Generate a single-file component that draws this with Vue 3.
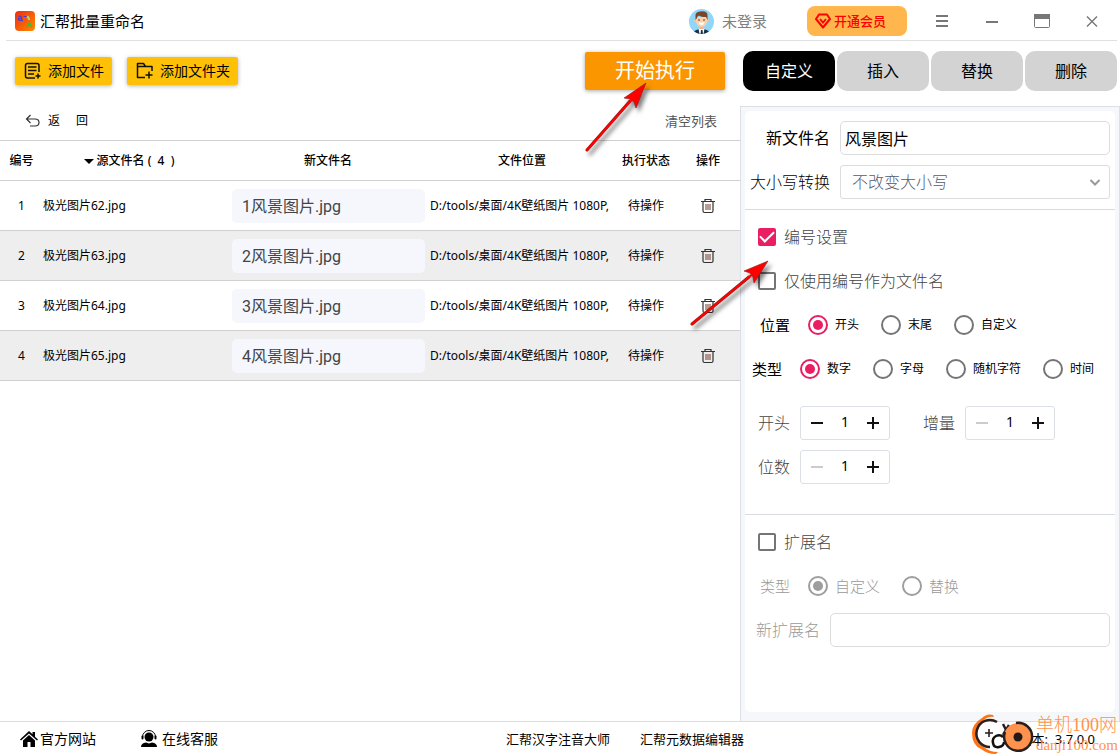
<script setup>
import { ref } from 'vue'

const tabs = ['自定义', '插入', '替换', '删除']
const activeTab = ref('自定义')

const path = 'D:/tools/桌面/4K壁纸图片 1080P,'
const files = ref([
  { id: 1, source: '极光图片62.jpg', target: '1风景图片.jpg', path, status: '待操作' },
  { id: 2, source: '极光图片63.jpg', target: '2风景图片.jpg', path, status: '待操作' },
  { id: 3, source: '极光图片64.jpg', target: '3风景图片.jpg', path, status: '待操作' },
  { id: 4, source: '极光图片65.jpg', target: '4风景图片.jpg', path, status: '待操作' },
])

const newName = ref('风景图片')
const letterCase = ref('不改变大小写')
const numbering = ref(true)
const numberOnly = ref(false)
const positions = ['开头', '末尾', '自定义']
const position = ref('开头')
const kinds = ['数字', '字母', '随机字符', '时间']
const kind = ref('数字')
const start = ref(1)
const step = ref(1)
const digits = ref(1)
const changeExt = ref(false)
const extKinds = ['自定义', '替换']
const extKind = ref('自定义')
const newExt = ref('')
</script>

<template>
  <div class="app">
    <header class="titlebar">
      <svg class="logo" viewBox="0 0 20 20" aria-hidden="true">
        <defs>
          <linearGradient id="logo-bg" x1="0" y1="0" x2="1" y2="1">
            <stop offset="0" stop-color="#f02a10" />
            <stop offset="1" stop-color="#ff8a00" />
          </linearGradient>
        </defs>
        <rect width="20" height="20" rx="4" fill="url(#logo-bg)" />
        <path d="M3.500 5.500q3-1 3 1v3M6.500 7q-3.500 0-3 1.500t3 .5M6.500 9.300h1.500" fill="none" stroke="#3540e8" stroke-width="1.200" />
        <path d="M8.500 5.500h3" fill="none" stroke="#3540e8" stroke-width="1" />
        <path d="M12 5.500q2 .5 2 3.500" fill="none" stroke="#a8d86a" stroke-width="2" />
        <path d="M12 16l2.500-4.500 2.500 5M13 14.500h3" fill="none" stroke="#35c030" stroke-width="1.300" />
      </svg>
      <h1>汇帮批量重命名</h1>
      <button class="user" type="button">
        <svg viewBox="0 0 25 25" aria-hidden="true">
          <defs><clipPath id="avatar-clip"><circle cx="12.500" cy="12.500" r="12.500" /></clipPath></defs>
          <g clip-path="url(#avatar-clip)">
            <rect width="25" height="25" fill="#8fd6fa" />
            <path d="M5 25v-2.500q1-1.500 5-2.500h5q4 1 5 2.500V25z" fill="#1c3350" />
            <path d="M9.500 19.500h6L14.500 25h-4z" fill="#fff" />
            <path d="M12 21h1.500l.5 4h-2.500z" fill="#1c3350" />
            <rect x="10.500" y="16" width="4" height="4" fill="#efb48c" />
            <circle cx="6.500" cy="11.500" r="1.500" fill="#f7c39c" />
            <circle cx="18.500" cy="11.500" r="1.500" fill="#f7c39c" />
            <path d="M7 8h11v5q-1 5-5.500 5T7 13z" fill="#fcd0aa" />
            <path d="M6.500 11V7Q6 3 11 2.500q8-1 7.500 4.500v4l-1.500-3q-5 0-7-1.500Q8 7 8 9z" fill="#7a4429" />
            <circle cx="10" cy="11" r=".8" fill="#3b2a20" />
            <circle cx="15" cy="11" r=".8" fill="#3b2a20" />
            <path d="M9.500 13.500h6q-.5 2.500-3 2.500t-3-2.500z" fill="#fff" />
          </g>
        </svg>
        未登录
      </button>
      <button class="vip" type="button">
        <svg viewBox="0 0 16 16" aria-hidden="true">
          <path d="M4 1.500h8l3 4.500-7 8.500L1 6z" fill="none" stroke="#f00" stroke-width="2" stroke-linejoin="round" />
          <path d="M5 6l3 3.500L11 6" fill="none" stroke="#f00" stroke-width="1.800" />
        </svg>
        开通会员
      </button>
      <div class="win">
        <button type="button" aria-label="菜单">
          <svg viewBox="0 0 16 16"><path d="M2 3h12M2 8h12M2 13h12" stroke="#777" stroke-width="2" /></svg>
        </button>
        <button type="button" aria-label="最小化">
          <svg viewBox="0 0 16 16"><path d="M2 9h12" stroke="#777" stroke-width="2" /></svg>
        </button>
        <button type="button" aria-label="最大化">
          <svg viewBox="0 0 16 16"><rect x=".5" y="1.500" width="15" height="13" rx="1" fill="#fff" stroke="#777" /><path d="M0 1h16v5H0z" fill="#777" /></svg>
        </button>
        <button type="button" aria-label="关闭">
          <svg viewBox="0 0 16 16"><path d="M3 3.500l10 10M13 3.500l-10 10" stroke="#777" stroke-width="1.400" /></svg>
        </button>
      </div>
    </header>

    <main class="body">
      <section class="left">
        <div class="toolbar">
          <button class="add" type="button">
            <svg viewBox="0 0 18 18" aria-hidden="true">
              <path d="M11 16H3.500Q1.500 16 1.500 14V3.500q0-2 2-2h9.500q2 0 2 2V10M4 5h8.500M4 8.500h8.500M4 12h6M14 11.500v5M11.500 14h5" fill="none" stroke="#111" stroke-width="1.500" />
            </svg>
            添加文件
          </button>
          <button class="add" type="button">
            <svg viewBox="0 0 18 18" aria-hidden="true">
              <path d="M9 15.500H1.500V1.500h6l2 3h6.500V9M1.500 4.500h8M13 9.500v7M9.500 13h7" fill="none" stroke="#111" stroke-width="1.500" stroke-linejoin="round" />
            </svg>
            添加文件夹
          </button>
          <button class="run" type="button">开始执行</button>
        </div>
        <div class="subbar">
          <button class="back" type="button">
            <svg viewBox="0 0 16 16" aria-hidden="true">
              <path d="M5.500 2L1.500 6l4 4M1.500 6h8.500q4 0 4 3.500t-4 3.500H5" fill="none" stroke="#333" stroke-width="1.200" />
            </svg>
            <span>返</span><span>回</span>
          </button>
          <button class="clear" type="button">清空列表</button>
        </div>
        <table class="files">
          <colgroup>
            <col class="c-no"><col class="c-src"><col class="c-new"><col><col class="c-state"><col class="c-op">
          </colgroup>
          <thead>
            <tr>
              <th>编号</th>
              <th class="sorted"><i class="caret"></i>源文件名 (&nbsp; 4 &nbsp;)</th>
              <th>新文件名</th>
              <th>文件位置</th>
              <th>执行状态</th>
              <th>操作</th>
            </tr>
          </thead>
          <tbody>
            <tr v-for="f in files" :key="f.id">
              <td class="mid">{{ f.id }}</td>
              <td>{{ f.source }}</td>
              <td class="edit"><input v-model="f.target" type="text" :aria-label="'新文件名 ' + f.id"></td>
              <td class="path">{{ f.path }}</td>
              <td class="mid">{{ f.status }}</td>
              <td class="mid">
                <button class="trash" type="button" aria-label="删除文件">
                  <svg viewBox="0 0 16 16">
                    <path d="M1 3.500h14M5 3.500V1.500h6v2M3 3.500V13q0 1.500 1.500 1.500h7q1.500 0 1.500-1.500V3.500" fill="none" stroke="#333" stroke-width="1.200" />
                    <path d="M6 6v6M8 6v6M10 6v6" stroke="#8a5a48" stroke-width="1.200" />
                  </svg>
                </button>
              </td>
            </tr>
          </tbody>
        </table>
      </section>

      <aside class="right">
        <nav class="tabs">
          <button v-for="t in tabs" :key="t" type="button" :class="{ active: t === activeTab }" @click="activeTab = t">{{ t }}</button>
        </nav>
        <div class="panel">
          <div class="card">
            <div class="group">
              <div class="row">
                <label class="field-label" for="new-name">新文件名</label>
                <input id="new-name" v-model="newName" class="text" type="text">
              </div>
              <div class="row">
                <label class="field-label thin" for="letter-case">大小写转换</label>
                <div class="select">
                  <select id="letter-case" v-model="letterCase">
                    <option>不改变大小写</option>
                    <option>全部大写</option>
                    <option>全部小写</option>
                  </select>
                  <svg viewBox="0 0 12 12" aria-hidden="true"><path d="M1.500 4L6 8.500 10.500 4" fill="none" stroke="#999" stroke-width="2" /></svg>
                </div>
              </div>
            </div>

            <div class="group numbering">
              <label class="row check"><input v-model="numbering" type="checkbox">编号设置</label>
              <label class="row check"><input v-model="numberOnly" type="checkbox">仅使用编号作为文件名</label>
              <div class="row radios indent" role="radiogroup" aria-label="位置">
                <span class="name">位置</span>
                <label v-for="p in positions" :key="p"><input v-model="position" type="radio" name="position" :value="p">{{ p }}</label>
              </div>
              <div class="row radios" role="radiogroup" aria-label="类型">
                <span class="name">类型</span>
                <label v-for="k in kinds" :key="k"><input v-model="kind" type="radio" name="kind" :value="k">{{ k }}</label>
              </div>
              <div class="row steppers first">
                <label for="start">开头</label>
                <div class="stepper">
                  <button type="button" aria-label="减少开头" @click="start--"><i class="minus"></i></button>
                  <input id="start" v-model="start" type="text">
                  <button type="button" aria-label="增加开头" @click="start++"><i class="minus plus"></i></button>
                </div>
                <label class="second" for="step">增量</label>
                <div class="stepper">
                  <button type="button" aria-label="减少增量" :disabled="step <= 1" @click="step--"><i class="minus"></i></button>
                  <input id="step" v-model="step" type="text">
                  <button type="button" aria-label="增加增量" @click="step++"><i class="minus plus"></i></button>
                </div>
              </div>
              <div class="row steppers">
                <label for="digits">位数</label>
                <div class="stepper">
                  <button type="button" aria-label="减少位数" :disabled="digits <= 1" @click="digits--"><i class="minus"></i></button>
                  <input id="digits" v-model="digits" type="text">
                  <button type="button" aria-label="增加位数" @click="digits++"><i class="minus plus"></i></button>
                </div>
              </div>
            </div>

            <div class="group">
              <label class="row check"><input v-model="changeExt" type="checkbox">扩展名</label>
              <div class="row radios indent off" role="radiogroup" aria-label="扩展名类型">
                <span class="name">类型</span>
                <label v-for="k in extKinds" :key="k"><input v-model="extKind" type="radio" name="ext" :value="k" :disabled="!changeExt">{{ k }}</label>
              </div>
              <div class="row">
                <label class="field-label short" for="new-ext">新扩展名</label>
                <input id="new-ext" v-model="newExt" class="text" type="text" :disabled="!changeExt">
              </div>
            </div>
          </div>
        </div>
      </aside>
    </main>

    <footer class="footer">
      <div class="links">
        <a href="#site">
          <svg viewBox="0 0 18 18" aria-hidden="true"><path d="M9 1L0 9.500l1 1L9 3.500l8 7 1-1-3-2.800V2h-2.500v2.300zM9 5L3 10.500V17h4.500v-5h3v5H15v-6.500z" /></svg>官方网站
        </a>
        <a class="service" href="#service">
          <svg viewBox="0 0 18 18" aria-hidden="true"><circle cx="9" cy="7" r="4.500" /><path d="M2.500 7a6.500 6.500 0 0113 0" fill="none" stroke="#000" stroke-width="1" /><rect x="1.500" y="5.500" width="2" height="4" rx="1" /><rect x="14.500" y="5.500" width="2" height="4" rx="1" /><path d="M1 17q0-4 5-4.500l3 1 3-1q5 .5 5 4.500z" /></svg>在线客服
        </a>
      </div>
      <div class="products">
        <a href="#pinyin">汇帮汉字注音大师</a>
        <a href="#metadata">汇帮元数据编辑器</a>
      </div>
      <span class="version">版本: &nbsp;3.7.0.0</span>
      <div class="watermark">
        <svg viewBox="0 0 64 42" aria-hidden="true">
          <path d="M21 2Q15 0 10 5 0 11 0 20q0 12 9 16 6 5 15 5l2-2q-9 0-14-5-8-5-8-14 0-8 7-12 5-5 11-4z" fill="#ff7414" />
          <path d="M25 9A13.500 13.500 0 1018 34" fill="none" stroke="#2a2020" stroke-width="2.500" />
          <path d="M17 16v8M13 20h8" stroke="#2a2020" stroke-width="1.600" />
          <path d="M31 11l3 6 3-5M34 17l-3 5" fill="none" stroke="#2a2020" stroke-width="2.500" />
          <path d="M31 24q-3-3-7-1t-3 7 6 4 5-5" fill="none" stroke="#111" stroke-width="2.500" />
          <circle cx="46" cy="24" r="14" fill="#ff924c" />
          <path d="M44 10a14 14 0 11-11 9" fill="none" stroke="#2a2020" stroke-width="2.500" />
          <circle cx="46" cy="24" r="4.500" fill="#211a1a" />
        </svg>
        <div class="mark-text"><span>单机100网</span><span class="domain">danji100.com</span></div>
      </div>
    </footer>

    <svg class="arrow to-run" viewBox="0 0 72 80" aria-hidden="true">
      <path d="M5 70L48 21" stroke="#8d1a1a" stroke-width="3" stroke-linecap="round" />
      <path d="M64 3L42 18l6 1 4 3 2 6z" fill="#f00" stroke="#8d1a1a" stroke-width=".6" />
      <path d="M5 70L52 17" stroke="#f00" stroke-width="2.200" stroke-linecap="round" />
    </svg>
    <svg class="arrow to-check" viewBox="0 0 90 76" aria-hidden="true">
      <path d="M5 67L62 20" stroke="#8d1a1a" stroke-width="3" stroke-linecap="round" />
      <path d="M81 4L57 14l6 2 3 4 1 6z" fill="#f00" stroke="#8d1a1a" stroke-width=".6" />
      <path d="M5 67L67 16" stroke="#f00" stroke-width="2.200" stroke-linecap="round" />
    </svg>
  </div>
</template>

<style>
body { margin: 0; background: #fff; }
</style>

<style scoped>
* { box-sizing: border-box; }
.app {
  position: relative;
  display: flex;
  flex-direction: column;
  min-height: 100vh;
  font-family: "Noto Sans", "Noto Sans CJK SC", sans-serif;
  font-size: 12px;
  line-height: 20px;
  color: #000;
  overflow: hidden;
}
button, input, select { font: inherit; color: inherit; margin: 0; }
button { border: 0; padding: 0; background: none; cursor: pointer; white-space: nowrap; }
svg { display: block; flex: none; }

.titlebar {
  display: flex;
  align-items: center;
  height: 41px;
  margin: 0 3px 0 6px;
  padding: 2px 0 0 9px;
  border-bottom: 1px solid #e0e0e0;
}
.logo { width: 20px; height: 20px; }
h1 { margin: 0 auto 0 5px; font-size: 15px; font-weight: 400; }
.user { display: flex; align-items: center; gap: 8px; margin-right: 40px; font-size: 15px; color: #808080; }
.user svg { width: 25px; height: 25px; }
.vip {
  display: flex;
  align-items: center;
  gap: 3px;
  width: 100px;
  height: 30px;
  padding-left: 8px;
  margin-right: 10px;
  border-radius: 8px;
  background: #ffb74d;
  color: #f00;
  font-size: 13px;
  font-weight: 500;
}
.vip svg { width: 16px; height: 16px; }
.win { display: flex; }
.win button { display: flex; align-items: center; justify-content: center; width: 50px; height: 30px; }
.win svg { width: 16px; height: 16px; }

.body { display: flex; flex: 1; }
.left { flex: 1; min-width: 0; }
.toolbar { display: flex; align-items: center; gap: 15px; height: 60px; padding: 0 15px; }
.add {
  display: flex;
  align-items: center;
  gap: 6px;
  height: 28px;
  padding: 0 8px 0 9px;
  border-radius: 2px;
  background: #ffc107;
  box-shadow: 0 1px 4px rgba(0, 0, 0, .3);
  font-size: 14px;
}
.add svg { width: 18px; height: 18px; }
.run {
  width: 140px;
  height: 38px;
  margin-left: auto;
  border-radius: 2px;
  background: #fb9600;
  box-shadow: 0 1px 4px rgba(0, 0, 0, .35);
  color: #fff;
  font-size: 20px;
}
.subbar { display: flex; align-items: center; justify-content: space-between; height: 39px; padding: 0 23px 0 25px; }
.back { display: flex; align-items: center; gap: 16px; }
.back svg { width: 16px; height: 16px; margin-right: -9px; }
.clear { font-size: 13px; color: #555; }

.files { width: 100%; table-layout: fixed; border-collapse: separate; border-spacing: 0; border-top: 1px solid #d0d0d0; }
.c-no { width: 43px; }
.c-src { width: 185px; }
.c-new { width: 200px; }
.c-state { width: 60px; }
.c-op { width: 64px; }
.files th { height: 40px; padding: 0; border-bottom: 1px solid #d0d0d0; font-weight: 500; }
.files .sorted { padding-right: 13px; }
.files td { height: 50px; padding: 0; border-bottom: 1px solid #d0d0d0; white-space: nowrap; }
.files tbody tr:nth-child(even) { background: #eee; }
.files .mid { text-align: center; }
.files .edit { padding: 0 3px 0 4px; }
.files .path { padding: 0 2px; overflow: hidden; }
.caret { display: inline-block; margin-right: 3px; border: 5px solid transparent; border-top-color: #000; border-bottom: 0; vertical-align: middle; }
.edit input {
  display: block;
  width: 100%;
  height: 34px;
  padding: 0 10px 1px;
  border: 0;
  border-radius: 5px;
  background: #f5f7fc;
  font-family: Roboto, "Noto Sans CJK SC", sans-serif;
  font-size: 16px;
  color: #444;
}
.trash { display: inline-block; vertical-align: middle; }
.trash svg { width: 16px; height: 16px; }

.right { display: flex; flex-direction: column; width: 380px; flex: none; }
.tabs { display: flex; gap: 2px; padding: 10px 3px 15px; }
.tabs button { flex: 1; height: 40px; border-radius: 10px; background: #d3d3d3; font-size: 16px; }
.tabs .active { background: #000; color: #fff; }
.panel { display: flex; flex: 1; padding: 4px 4px 9px; border: 1px solid #dcdfe6; border-bottom: 0; background: #f5f7fa; }
.card { flex: 1; border-radius: 5px; background: #fff; }
.group { padding: 5px 0; }
.group + .group { border-top: 1px solid #d8dadf; }
.numbering { padding-bottom: 25px; }
.row { display: flex; align-items: center; height: 44px; padding-right: 5px; font-size: 16px; }
.field-label { flex: none; width: 85px; margin-right: 10px; text-align: right; }
.field-label.thin { font-weight: 300; }
.field-label.short { width: 75px; color: #999; font-weight: 300; }
.text { flex: 1; min-width: 0; height: 34px; padding: 0 4px; border: 1px solid #dcdcdc; border-radius: 5px; background: #fff; }
.select { position: relative; flex: 1; }
select {
  display: block;
  width: 100%;
  height: 34px;
  padding: 0 11px;
  border: 1px solid #dcdcdc;
  border-radius: 3px;
  background: #fff;
  color: #555b70;
  font-weight: 300;
  appearance: none;
}
.select svg { position: absolute; right: 9px; top: 11px; width: 12px; height: 12px; pointer-events: none; }
.check { gap: 8px; padding-left: 13px; color: #444; font-weight: 300; }
.check input {
  appearance: none;
  width: 18px;
  height: 18px;
  border: 2px solid #757575;
  border-radius: 2px;
}
.check input:checked { display: grid; place-items: center; border-color: #e91e63; background: #e91e63; }
.check input:checked::after {
  content: "";
  width: 12px;
  height: 6px;
  margin-bottom: 4px;
  border: solid #fff;
  border-width: 0 0 2px 2px;
  transform: rotate(-45deg);
}
.radios { gap: 22px; padding-left: 7px; font-size: 12px; }
.radios.indent { padding-left: 15px; }
.radios .name { margin-right: -4px; font-size: 15px; }
.radios label { display: flex; align-items: center; gap: 7px; }
.radios input {
  display: grid;
  place-items: center;
  appearance: none;
  width: 20px;
  height: 20px;
  border: 2px solid #757575;
  border-radius: 50%;
}
.radios input:checked { border-color: #e91e63; }
.radios input:checked::after { content: ""; width: 10px; height: 10px; border-radius: 50%; background: #e91e63; }
.radios.off { font-size: 15px; color: #999; font-weight: 300; }
.radios.off input { border-color: #9e9e9e; }
.radios.off input::after { background: #9e9e9e; }
.steppers { gap: 10px; padding-left: 13px; color: #444; font-weight: 300; }
.steppers.first { margin-top: 10px; }
.second { margin-left: 23px; }
.stepper { display: flex; width: 90px; height: 34px; border: 1px solid #dcdfe6; border-radius: 3px; }
.stepper button { display: grid; place-items: center; width: 32px; }
.stepper input { flex: 1; min-width: 0; padding: 0 0 2px; border: 0; background: none; text-align: center; font-size: 14px; font-weight: 400; color: #000; }
.minus { position: relative; width: 12px; height: 2px; background: #111; }
.plus::after { content: ""; position: absolute; left: 5px; top: -5px; width: 2px; height: 12px; background: #111; }
button:disabled .minus { background: #ccc; }

.footer { position: relative; display: flex; align-items: center; height: 34px; padding-right: 25px; border-top: 1px solid #ddd; font-size: 13px; }
.footer a { display: flex; align-items: center; color: #000; text-decoration: none; }
.links { display: flex; gap: 44px; width: 506px; padding-left: 20px; font-size: 14px; }
.links a { gap: 2px; }
.links .service { gap: 4px; }
.links svg { width: 18px; height: 18px; }
.products { display: flex; gap: 30px; }
.version { margin-left: auto; }
.watermark { position: absolute; right: 2px; bottom: 0; display: flex; align-items: flex-end; }
.watermark svg { width: 64px; height: 42px; }
.mark-text {
  display: flex;
  flex-direction: column;
  font-family: "Liberation Serif", "Noto Sans CJK SC", serif;
  font-size: 18px;
  line-height: 20px;
  font-weight: 300;
  color: #ff924c;
}
.domain { font-size: 15px; line-height: 20px; }

.arrow { position: absolute; overflow: visible; pointer-events: none; filter: drop-shadow(3px 4px 2px rgba(0, 0, 0, .5)); }
.to-run { left: 582px; top: 80px; width: 72px; height: 80px; }
.to-check { left: 687px; top: 257px; width: 90px; height: 76px; }
</style>
